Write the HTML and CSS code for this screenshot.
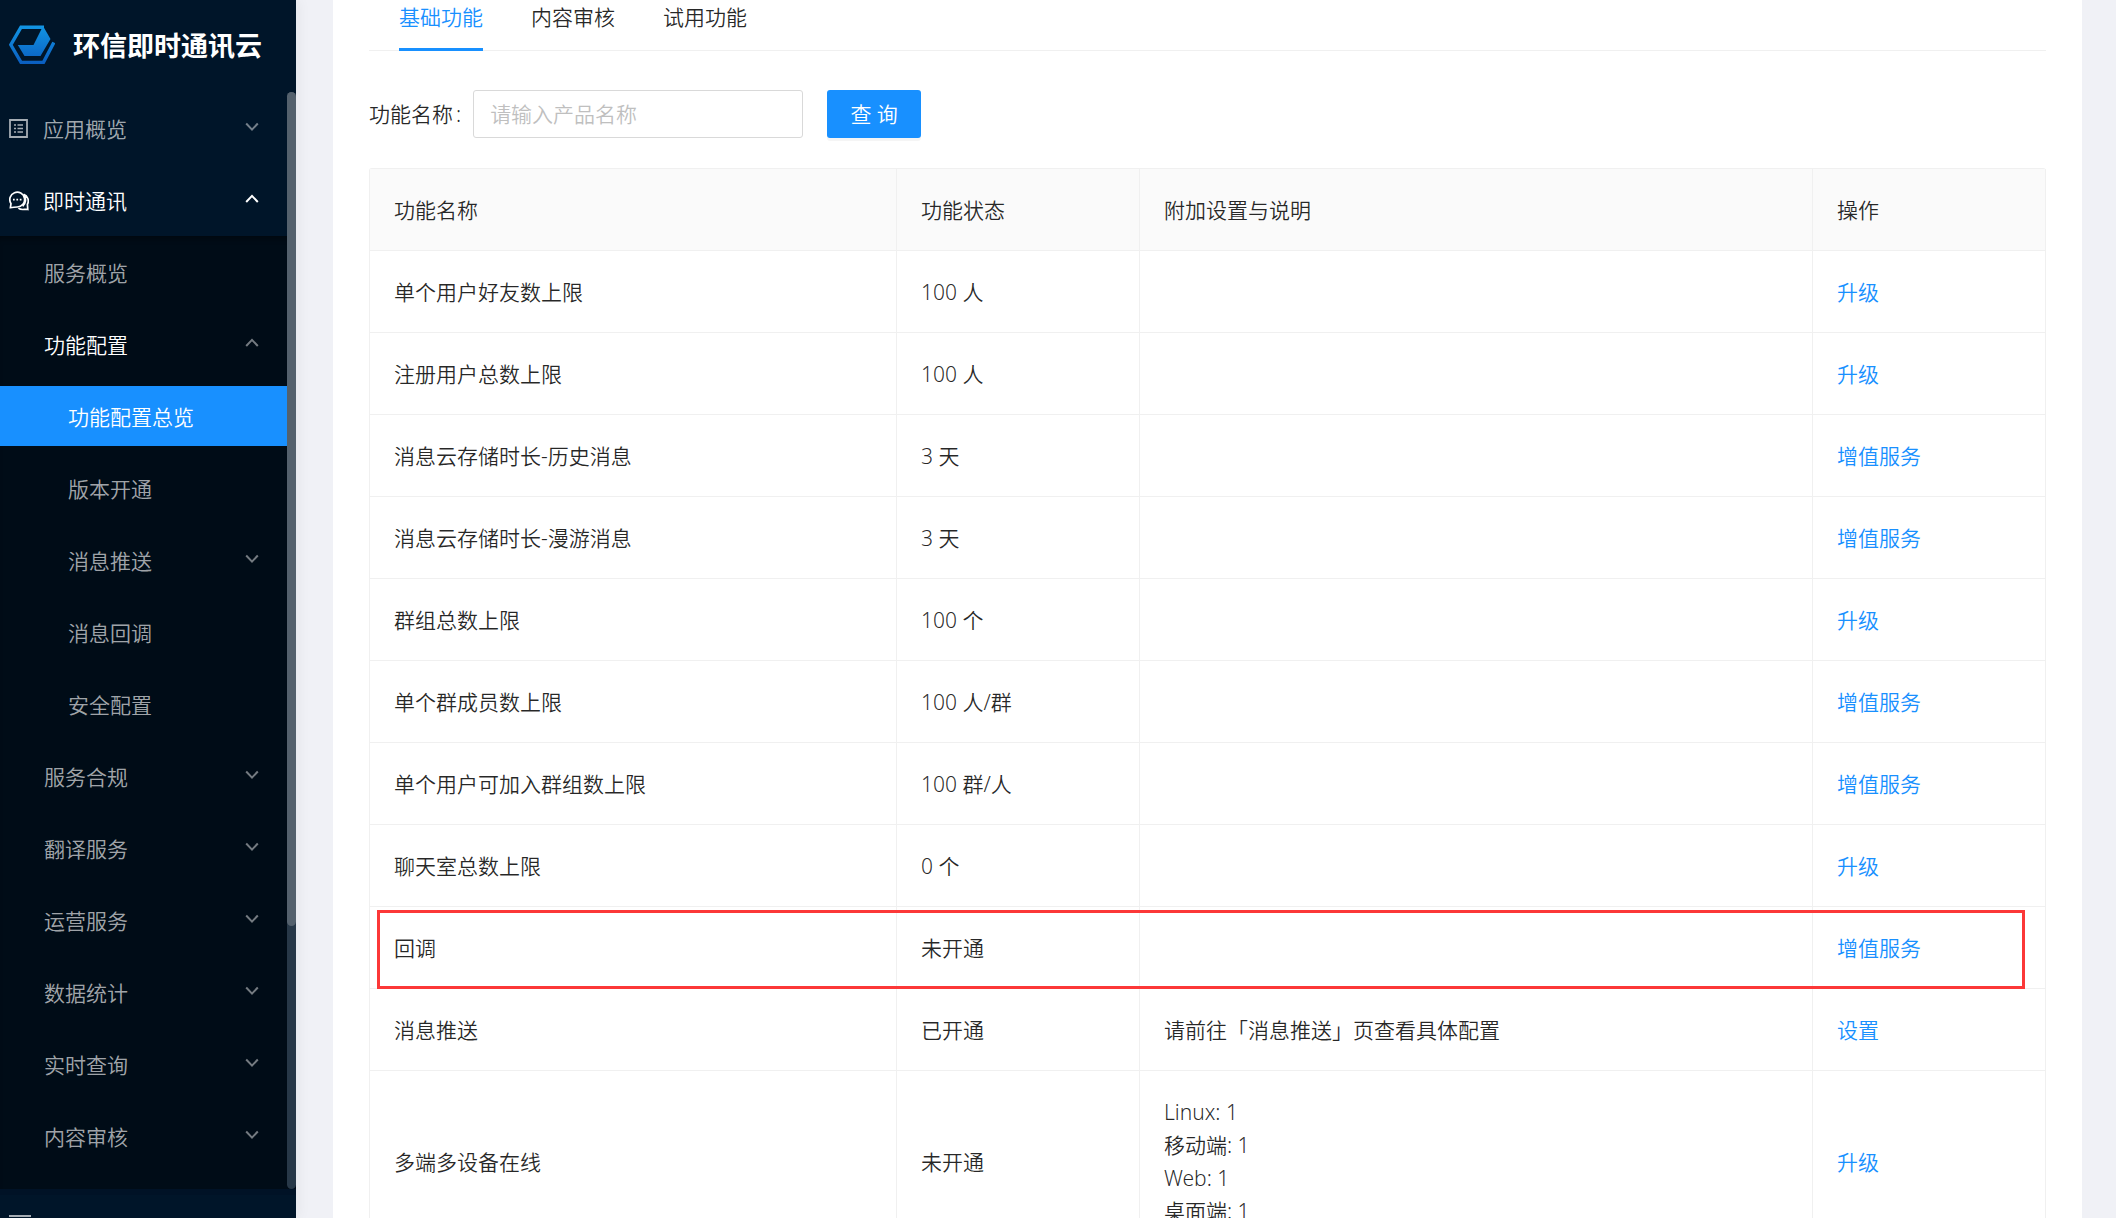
FILE: index.html
```
<!DOCTYPE html>
<html lang="zh-CN">
<head>
    <meta charset="UTF-8">
    <meta name="viewport" content="width=device-width, initial-scale=1.0">
    <title>环信即时通讯云</title>
    <link rel="stylesheet" href="styles.css">
</head>
<body>
    <svg class="symbols" aria-hidden="true">
        <symbol id="arrow-down" viewBox="0 0 14 10"><path d="M1.2 1.5 L7 7.6 L12.8 1.5" fill="none" stroke="currentColor" stroke-width="2"/></symbol>
        <symbol id="arrow-up" viewBox="0 0 14 10"><path d="M1.2 8 L7 1.9 L12.8 8" fill="none" stroke="currentColor" stroke-width="2"/></symbol>
    </svg>

    <aside class="sider">
        <div class="logo">
            <svg class="logo-icon" viewBox="0 0 46 40" aria-hidden="true">
                <defs>
                    <linearGradient id="logo-fill" x1="0" y1="0" x2="0" y2="40" gradientUnits="userSpaceOnUse">
                        <stop offset="0" stop-color="#1296e4"/>
                        <stop offset="1" stop-color="#0a5cbf"/>
                    </linearGradient>
                </defs>
                <path d="M35 2.2 H12 L1.8 19.8 L12 37.4 H34.5 L44.8 17.5" fill="none" stroke="url(#logo-fill)" stroke-width="3.4"/>
                <path d="M34 1 L41.5 14 L31.5 31 H15.5 L8.8 20 H24.5 Z" fill="url(#logo-fill)"/>
            </svg>
            <span>环信即时通讯云</span>
        </div>

        <nav class="menu">
            <ul class="menu-list">
                <li><a href="#" class="item">
                    <svg class="item-icon" viewBox="0 0 20 20" aria-hidden="true">
                        <path d="M1 1 H18 V18 H1 Z" fill="none" stroke="currentColor" stroke-width="1.8"/>
                        <path d="M5 6 H7 M5 9.5 H7 M5 13 H7 M8.5 6 H14 M8.5 9.5 H14 M8.5 13 H14" stroke="currentColor" stroke-width="1.6"/>
                    </svg>
                    <span>应用概览</span><svg class="arrow"><use href="#arrow-down"/></svg></a></li>
                <li><a href="#" class="item open">
                    <svg class="item-icon" viewBox="0 0 20 20" aria-hidden="true">
                        <path d="M1.4 16.6 L2 12.6 A7.4 7.4 0 1 1 8.2 16 C6.2 16 4.5 16.4 1.4 16.6 Z" fill="none" stroke="currentColor" stroke-width="1.7"/>
                        <path d="M14.6 3.4 C18.8 5 20.4 9.5 18.4 13.4 L18.8 18.4 C15.5 17.8 12.5 19.8 9.4 17.2 M13.6 15.2 C17 12.6 17.4 7.4 15 4" fill="none" stroke="currentColor" stroke-width="1.7"/>
                        <path d="M4 8.7 H5.7 M7.4 8.7 H9.1 M10.8 8.7 H12.5" stroke="currentColor" stroke-width="1.7"/>
                    </svg>
                    <span>即时通讯</span><svg class="arrow"><use href="#arrow-up"/></svg></a></li>
            </ul>
            <ul class="menu-list submenu">
                <li><a href="#" class="item">服务概览</a></li>
                <li><a href="#" class="item current"><span>功能配置</span><svg class="arrow"><use href="#arrow-up"/></svg></a></li>
                <li><a href="#" class="item level3 selected">功能配置总览</a></li>
                <li><a href="#" class="item level3">版本开通</a></li>
                <li><a href="#" class="item level3"><span>消息推送</span><svg class="arrow"><use href="#arrow-down"/></svg></a></li>
                <li><a href="#" class="item level3">消息回调</a></li>
                <li><a href="#" class="item level3">安全配置</a></li>
                <li><a href="#" class="item"><span>服务合规</span><svg class="arrow"><use href="#arrow-down"/></svg></a></li>
                <li><a href="#" class="item"><span>翻译服务</span><svg class="arrow"><use href="#arrow-down"/></svg></a></li>
                <li><a href="#" class="item"><span>运营服务</span><svg class="arrow"><use href="#arrow-down"/></svg></a></li>
                <li><a href="#" class="item"><span>数据统计</span><svg class="arrow"><use href="#arrow-down"/></svg></a></li>
                <li><a href="#" class="item"><span>实时查询</span><svg class="arrow"><use href="#arrow-down"/></svg></a></li>
                <li><a href="#" class="item"><span>内容审核</span><svg class="arrow"><use href="#arrow-down"/></svg></a></li>
            </ul>
            <div class="scrollbar"><div class="thumb"></div></div>
        </nav>

        <button class="collapse" aria-label="收起菜单">
            <svg viewBox="0 0 22 20" aria-hidden="true"><path d="M0 1 H22 M8 7 H22 M8 13 H22 M0 19 H22" stroke="currentColor" stroke-width="2"/></svg>
        </button>
    </aside>

    <main class="content">
        <div class="card">
            <nav class="tabs">
                <a href="#" class="tab active">基础功能</a>
                <a href="#" class="tab">内容审核</a>
                <a href="#" class="tab">试用功能</a>
            </nav>

            <form class="search">
                <label for="feature-name">功能名称<span class="colon">:</span></label>
                <input type="text" id="feature-name" placeholder="请输入产品名称">
                <button type="button">查 询</button>
            </form>

            <table class="features">
                <colgroup>
                    <col class="col-name">
                    <col class="col-status">
                    <col class="col-note">
                    <col class="col-action">
                </colgroup>
                <thead>
                    <tr><th>功能名称</th><th>功能状态</th><th>附加设置与说明</th><th>操作</th></tr>
                </thead>
                <tbody>
                    <tr><td>单个用户好友数上限</td><td>100 人</td><td></td><td><a href="#">升级</a></td></tr>
                    <tr><td>注册用户总数上限</td><td>100 人</td><td></td><td><a href="#">升级</a></td></tr>
                    <tr><td>消息云存储时长-历史消息</td><td>3 天</td><td></td><td><a href="#">增值服务</a></td></tr>
                    <tr><td>消息云存储时长-漫游消息</td><td>3 天</td><td></td><td><a href="#">增值服务</a></td></tr>
                    <tr><td>群组总数上限</td><td>100 个</td><td></td><td><a href="#">升级</a></td></tr>
                    <tr><td>单个群成员数上限</td><td>100 人/群</td><td></td><td><a href="#">增值服务</a></td></tr>
                    <tr><td>单个用户可加入群组数上限</td><td>100 群/人</td><td></td><td><a href="#">增值服务</a></td></tr>
                    <tr><td>聊天室总数上限</td><td>0 个</td><td></td><td><a href="#">升级</a></td></tr>
                    <tr class="marked"><td>回调</td><td>未开通</td><td></td><td><a href="#">增值服务</a></td></tr>
                    <tr><td>消息推送</td><td>已开通</td><td>请前往「消息推送」页查看具体配置</td><td><a href="#">设置</a></td></tr>
                    <tr><td>多端多设备在线</td><td>未开通</td><td>Linux: 1<br>移动端: 1<br>Web: 1<br>桌面端: 1</td><td><a href="#">升级</a></td></tr>
                </tbody>
            </table>
        </div>
    </main>
</body>
</html>
```
FILE: styles.css
```
* {
    box-sizing: border-box;
}

body {
    margin: 0;
    height: 100vh;
    display: flex;
    overflow: hidden;
    background-color: #f0f1f6;
    color: rgba(0, 0, 0, 0.85);
    font-family: "Noto Sans", "Noto Sans CJK SC", sans-serif;
    font-size: 21px;
    font-weight: 350;
    line-height: 33px;
}

a {
    color: #1890ff;
    text-decoration: none;
}

.symbols {
    display: none;
}

/* Sidebar */
.sider {
    width: 296px;
    flex: none;
    display: flex;
    flex-direction: column;
    background-color: #001529;
    color: #fff;
    box-shadow: 3px 0 12px rgba(29, 35, 41, 0.05);
}

.logo {
    height: 92px;
    flex: none;
    display: flex;
    align-items: center;
    gap: 18px;
    padding: 0 9px 2px;
    font-size: 27px;
    font-weight: 700;
    white-space: nowrap;
}

.logo-icon {
    width: 46px;
    height: 40px;
    flex: none;
}

.menu {
    flex: 1;
    min-height: 0;
    display: flex;
    flex-direction: column;
    position: relative;
    overflow: hidden;
}

.menu-list {
    display: flex;
    flex-direction: column;
    gap: 12px;
    margin: 0;
    padding: 6px 0;
    list-style: none;
}

.submenu {
    flex: 1;
    background-color: #000c17;
    box-shadow: inset 0 6px 6px -4px rgba(0, 0, 0, 0.45);
}

.item {
    height: 60px;
    display: flex;
    align-items: center;
    padding: 2px 37px 0 9px;
    color: rgba(255, 255, 255, 0.65);
}

.submenu .item {
    padding-left: 44px;
}

.submenu .level3 {
    padding-left: 68px;
}

.item.open,
.item.current,
.item.selected {
    color: #fff;
}

.item.selected {
    background-color: #1890ff;
}

.item-icon {
    width: 20px;
    height: 20px;
    margin-right: 14px;
}

.arrow {
    width: 14px;
    height: 10px;
    margin: 0 0 4px auto;
    opacity: 0.7;
}

.open .arrow {
    opacity: 1;
}

.current .arrow {
    color: rgba(255, 255, 255, 0.65);
}

.scrollbar {
    position: absolute;
    top: 0;
    right: 0;
    bottom: 0;
    width: 9px;
    border-radius: 5px;
    background-color: #273848;
}

.thumb {
    height: 76%;
    border-radius: 5px;
    background-color: #54616d;
}

.collapse {
    height: 29px;
    flex: none;
    padding: 26px 9px 0;
    border: none;
    background-color: #001529;
    box-shadow: inset 0 7px 0 -1px #001226;
    color: rgba(255, 255, 255, 0.65);
    text-align: left;
    overflow: hidden;
    cursor: pointer;
}

.collapse svg {
    display: block;
    width: 22px;
    height: 20px;
}

/* Content */
.content {
    flex: 1;
    min-width: 0;
    padding: 0 34px 0 37px;
}

.card {
    min-height: 100vh;
    padding: 0 36px;
    background-color: #fff;
}

.tabs {
    display: flex;
    gap: 48px;
    height: 51px;
    padding: 0 30px;
    border-bottom: 1px solid #f0f0f0;
}

.tab {
    height: 51px;
    padding-top: 1px;
    color: rgba(0, 0, 0, 0.85);
}

.tab.active {
    color: #1890ff;
    border-bottom: 3px solid #1890ff;
}

.search {
    display: flex;
    align-items: center;
    padding: 39px 0 30px;
}

.colon {
    margin: 0 12px 0 3px;
}

.search input {
    width: 330px;
    height: 48px;
    padding: 0 16px;
    border: 1px solid #d9d9d9;
    border-radius: 3px;
    color: inherit;
    font: inherit;
}

.search input::placeholder {
    color: #bfbfbf;
}

.search button {
    width: 94px;
    height: 48px;
    margin-left: 24px;
    padding: 0;
    border: none;
    border-radius: 3px;
    background-color: #1890ff;
    box-shadow: 0 3px 0 rgba(0, 0, 0, 0.04);
    color: #fff;
    font: inherit;
    cursor: pointer;
}

/* Feature table */
.features {
    width: 100%;
    table-layout: fixed;
    border-collapse: separate;
    border-spacing: 0;
    border-top: 1px solid #f0f0f0;
    border-left: 1px solid #f0f0f0;
    border-radius: 3px;
}

.col-name {
    width: 527px;
}

.col-status {
    width: 243px;
}

.col-action {
    width: 233px;
}

.features th,
.features td {
    padding: 25px 24px 23px;
    border-right: 1px solid #f0f0f0;
    border-bottom: 1px solid #f0f0f0;
    font-weight: inherit;
    text-align: left;
}

.features th {
    background-color: #fafafa;
}

.marked {
    position: relative;
}

/* red frame round the highlighted row */
.marked td:first-child::after {
    content: "";
    position: absolute;
    top: 3px;
    right: 21px;
    bottom: 0;
    left: 7px;
    border: 3px solid #fc3838;
    pointer-events: none;
}
```
